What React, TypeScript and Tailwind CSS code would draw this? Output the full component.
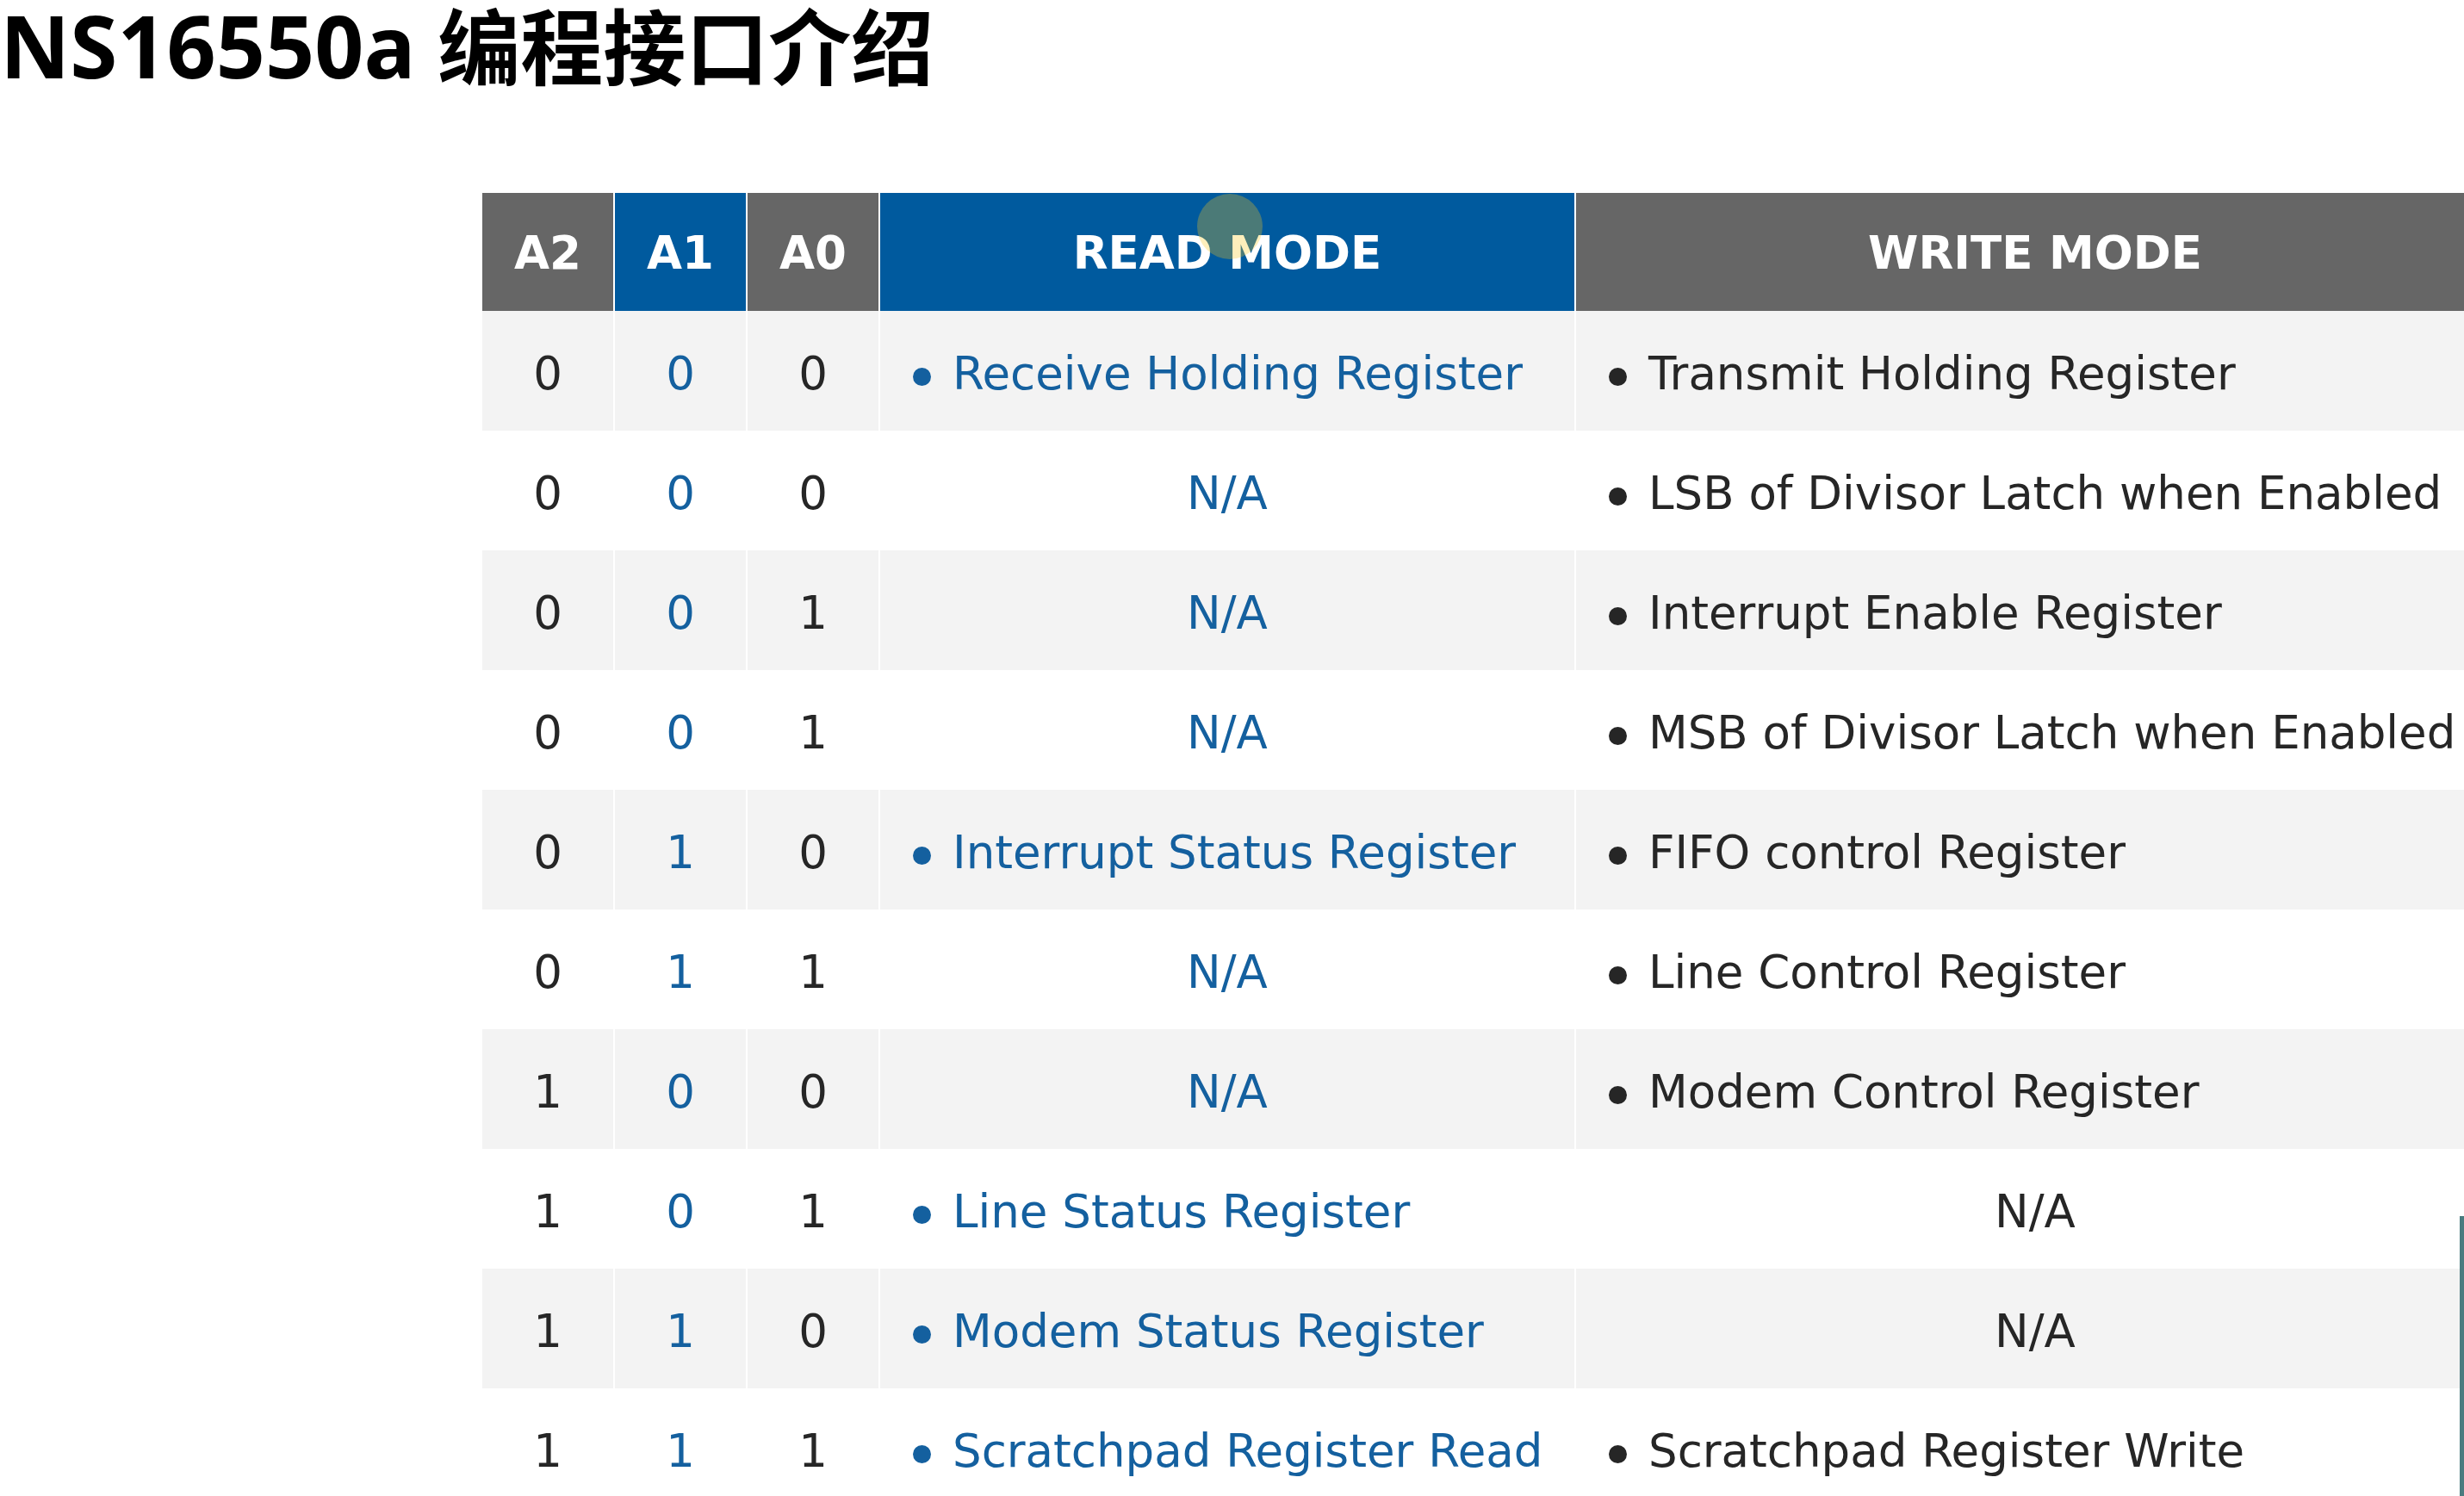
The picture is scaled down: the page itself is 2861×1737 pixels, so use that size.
import React from "react";

type Cell = { text: string; bullet: boolean };
type Row = { a2: string; a1: string; a0: string; read: Cell; write: Cell };

const b = (text: string): Cell => ({ text, bullet: true });
const na: Cell = { text: "N/A", bullet: false };

const rows: Row[] = [
  { a2: "0", a1: "0", a0: "0", read: b("Receive Holding Register"), write: b("Transmit Holding Register") },
  { a2: "0", a1: "0", a0: "0", read: na, write: b("LSB of Divisor Latch when Enabled") },
  { a2: "0", a1: "0", a0: "1", read: na, write: b("Interrupt Enable Register") },
  { a2: "0", a1: "0", a0: "1", read: na, write: b("MSB of Divisor Latch when Enabled") },
  { a2: "0", a1: "1", a0: "0", read: b("Interrupt Status Register"), write: b("FIFO control Register") },
  { a2: "0", a1: "1", a0: "1", read: na, write: b("Line Control Register") },
  { a2: "1", a1: "0", a0: "0", read: na, write: b("Modem Control Register") },
  { a2: "1", a1: "0", a0: "1", read: b("Line Status Register"), write: na },
  { a2: "1", a1: "1", a0: "0", read: b("Modem Status Register"), write: na },
  { a2: "1", a1: "1", a0: "1", read: b("Scratchpad Register Read"), write: b("Scratchpad Register Write") },
];

function TextCell({ cell, blue, bg }: { cell: Cell; blue: boolean; bg: string }) {
  const color = blue ? "text-[#14609f]" : "text-[#262626]";
  const dot = blue ? "bg-[#14609f]" : "bg-[#262626]";
  if (!cell.bullet) {
    return (
      <div className={`${bg} ${color} flex items-center justify-center whitespace-nowrap pt-[6px]`}>{cell.text}</div>
    );
  }
  return (
    <div className={`${bg} ${color} flex items-center whitespace-nowrap pl-[38px] pt-[6px]`}>
      <span className={`${dot} inline-block w-[21px] h-[21px] rounded-full mr-[25px] mt-[8px] shrink-0`} />
      <span>{cell.text}</span>
    </div>
  );
}

export default function App() {
  return (
    <div className="relative w-[2861px] h-[1737px] overflow-hidden bg-white">
      <div
        className="h-[100px] leading-[100px] font-bold text-black whitespace-nowrap"
        style={{ fontFamily: '"Noto Sans", "Noto Sans CJK SC", sans-serif' }}
      >
        <span className="text-[100px]">NS16550a </span>
        <span className="text-[96px]" style={{ fontFamily: '"Noto Sans CJK SC", sans-serif' }}>
          编程接口介绍
        </span>
      </div>

      <div
        className="ml-[560px] mt-[124px] grid grid-cols-[152px_152px_152px_806px_1066px] gap-x-[2px] w-[2336px]"
        style={{ fontFamily: '"DejaVu Sans", Verdana, sans-serif' }}
      >
        <div className="h-[137px] bg-[#666666] text-white font-bold text-[53px] flex items-center justify-center pt-[2px]">A2</div>
        <div className="h-[137px] bg-[#005a9e] text-white font-bold text-[53px] flex items-center justify-center pt-[2px]">A1</div>
        <div className="h-[137px] bg-[#666666] text-white font-bold text-[53px] flex items-center justify-center pt-[2px]">A0</div>
        <div className="h-[137px] bg-[#005a9e] text-white font-bold text-[53px] flex items-center justify-center pt-[2px]">READ MODE</div>
        <div className="h-[137px] bg-[#666666] text-white font-bold text-[53px] flex items-center justify-center pt-[2px]">WRITE MODE</div>

        {rows.map((r, i) => {
          const bg = i % 2 === 0 ? "bg-[#f3f3f3]" : "bg-white";
          return (
            <React.Fragment key={i}>
              <div className={`${bg} h-[139px] text-[53px] text-[#262626] flex items-center justify-center pt-[6px]`}>{r.a2}</div>
              <div className={`${bg} h-[139px] text-[53px] text-[#14609f] flex items-center justify-center pt-[6px]`}>{r.a1}</div>
              <div className={`${bg} h-[139px] text-[53px] text-[#262626] flex items-center justify-center pt-[6px]`}>{r.a0}</div>
              <div className="h-[139px] text-[53px] grid">
                <TextCell cell={r.read} blue={true} bg={bg} />
              </div>
              <div className="h-[139px] text-[53px] grid">
                <TextCell cell={r.write} blue={false} bg={bg} />
              </div>
            </React.Fragment>
          );
        })}
      </div>

      <div className="absolute left-[1390px] top-[225px] w-[76px] h-[76px] rounded-full bg-[#f8c81e]/30" />
      <div className="absolute right-0 top-[1412px] bottom-0 w-[5px] bg-[#4a7b7f]" />
    </div>
  );
}
